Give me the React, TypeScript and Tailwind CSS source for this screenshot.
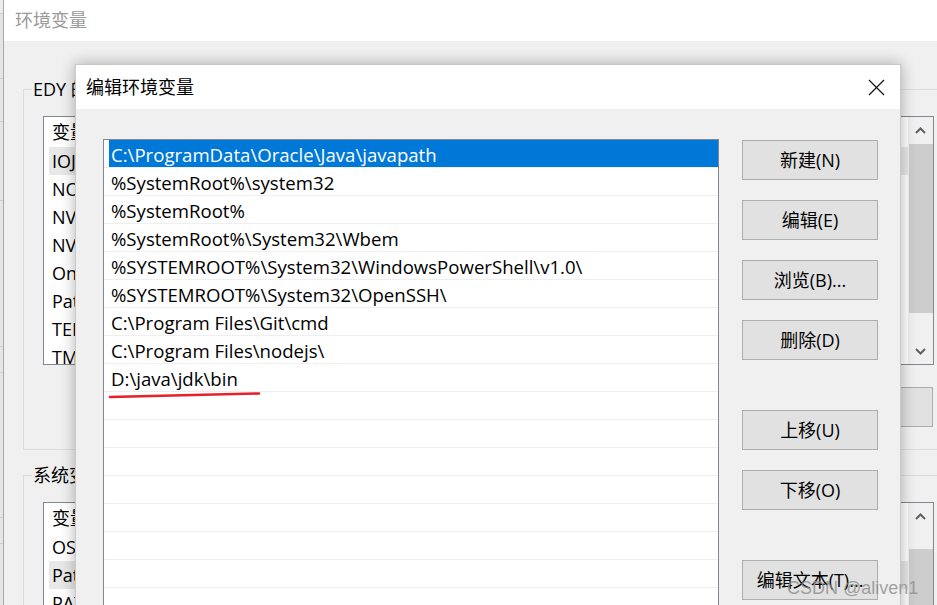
import React from 'react'

const pathEntries = [
  'C:\\ProgramData\\Oracle\\Java\\javapath',
  '%SystemRoot%\\system32',
  '%SystemRoot%',
  '%SystemRoot%\\System32\\Wbem',
  '%SYSTEMROOT%\\System32\\WindowsPowerShell\\v1.0\\',
  '%SYSTEMROOT%\\System32\\OpenSSH\\',
  'C:\\Program Files\\Git\\cmd',
  'C:\\Program Files\\nodejs\\',
  'D:\\java\\jdk\\bin',
  '', '', '', '', '', '', '', '',
]

const dialogButtons = [
  { label: '新建(N)', gap: 'mt-0' },
  { label: '编辑(E)', gap: 'mt-[20px]' },
  { label: '浏览(B)...', gap: 'mt-[20px]' },
  { label: '删除(D)', gap: 'mt-[20px]' },
  { label: '上移(U)', gap: 'mt-[50px]' },
  { label: '下移(O)', gap: 'mt-[20px]' },
  { label: '编辑文本(T)...', gap: 'mt-[50px]' },
]

const userVars = ['IOJ_HOME', 'NODE_PATH', 'NVM_HOME', 'NVM_SYMLINK', 'OneDrive', 'Path', 'TEMP', 'TMP']
const systemVars = ['OS', 'Path', 'PATHEXT', 'PROCESSOR_ARCHITECTURE']

function Chevron({ up }: { up?: boolean }) {
  return (
    <svg width="11" height="7" viewBox="0 0 11 7" className="block">
      <polyline
        points={up ? '1,6 5.5,1.5 10,6' : '1,1 5.5,5.5 10,1'}
        fill="none"
        stroke="#606060"
        strokeWidth="2"
      />
    </svg>
  )
}

function BgList({ rows, highlight, height, thumbTop, thumbHeight }: {
  rows: string[]
  highlight: number
  height: string
  thumbTop: string
  thumbHeight: string
}) {
  return (
    <div className={`flex w-[891px] ${height} border border-[#828790] bg-white overflow-hidden`}>
      <div className="flex-1 pl-[5px]">
        <div className="h-[30px] flex items-center pl-[3px]">变量</div>
        {rows.map((r, i) => (
          <div
            key={r}
            className={`h-[28px] flex items-center pl-[3px] ${i === highlight ? 'bg-[#e8e8e8]' : ''}`}
          >
            {r}
          </div>
        ))}
      </div>
      <div className="w-[25px] bg-[#f0f0f0] flex flex-col items-center">
        <div className="h-[27px] shrink-0 flex items-center justify-center">
          <Chevron up />
        </div>
        <div className={`w-[24px] shrink-0 ${thumbTop} ${thumbHeight} bg-[#cdcdcd]`} />
        <div className="flex-1" />
        <div className="h-[26px] shrink-0 flex items-center justify-center">
          <Chevron />
        </div>
      </div>
    </div>
  )
}

export default function App() {
  return (
    <div className="relative w-[937px] h-[605px] overflow-hidden bg-[#f0f0f0] text-[18px] text-black font-['Open_Sans','Noto_Sans_CJK_SC',sans-serif]">
      <div className="flex h-full">
        {/* window behind, only its edge shows */}
        <div className="w-[4px] shrink-0 h-full bg-[#e4e4e4] border-r border-[#a8a8a8] flex flex-col">
          <div className="h-[14px] shrink-0 bg-[#ededed] border-b border-[#cfcfcf]" />
          <div className="h-[65px] shrink-0 border-b border-[#cfcfcf]" />
          <div className="h-[43px] shrink-0 border-b border-[#cfcfcf]" />
          <div className="h-[79px] shrink-0 border-b border-[#cfcfcf]" />
          <div className="h-[146px] shrink-0 border-b border-[#cfcfcf]" />
          <div className="h-[26px] shrink-0 border-b border-[#cfcfcf]" />
          <div className="h-[145px] shrink-0 border-b border-[#cfcfcf]" />
          <div className="h-[26px] shrink-0 border-b border-[#cfcfcf]" />
        </div>

        {/* 环境变量 window */}
        <div className="flex-1 flex flex-col overflow-hidden">
          <div className="h-[41px] shrink-0 bg-white flex items-center pl-[11px] text-[#9a9a9a]">环境变量</div>
          <div className="flex-1 min-h-0 pl-[19px]">
            <div className="relative mt-[48px] w-[940px] border border-[#dcdcdc] pl-[19px] pt-[26px] pb-[22px]">
              <span className="absolute -top-[13px] left-[8px] px-[1px] bg-[#f0f0f0] leading-[24px]">EDY 的用户变量</span>
              <BgList rows={userVars} highlight={0} height="h-[249px]" thumbTop="mt-0" thumbHeight="h-[169px]" />
              <div className="mt-[22px] w-[891px] flex justify-end pr-[1px]">
                <div className="w-[136px] h-[40px] bg-[#e1e1e1] border border-[#adadad]" />
              </div>
            </div>
            <div className="relative mt-[25px] w-[940px] h-[200px] border border-[#dcdcdc] pl-[19px] pt-[26px]">
              <span className="absolute -top-[13px] left-[8px] px-[1px] bg-[#f0f0f0] leading-[24px]">系统变量</span>
              <BgList rows={systemVars} highlight={1} height="h-[200px]" thumbTop="mt-[19px]" thumbHeight="h-[120px]" />
            </div>
          </div>
        </div>
      </div>

      {/* 编辑环境变量 dialog */}
      <div className="absolute left-[75px] top-[64px] w-[826px] h-[580px] flex flex-col border border-[#c9c9c9] bg-[#f0f0f0] shadow-[0_0_14px_rgba(0,0,0,0.3)]">
        <div className="h-[44px] shrink-0 bg-white flex items-center justify-between pl-[10px] pr-[15px]">
          <span>编辑环境变量</span>
          <svg width="17" height="17" viewBox="0 0 17 17">
            <path d="M1 1 L16 16 M16 1 L1 16" stroke="#111" strokeWidth="1.2" />
          </svg>
        </div>
        <div className="flex-1 flex pt-[30px] pl-[27px]">
          <div className="w-[616px] h-full border border-[#828790] border-b-0 bg-white">
            {pathEntries.map((p, i) => (
              <div key={i} className="h-[28px] border-b border-[#efefef]">
                <div
                  className={`ml-[5px] h-[27px] pl-[2px] pt-[2px] flex items-center whitespace-nowrap text-[18.6px] ${i === 0 ? 'bg-[#0078d7] text-white' : ''}`}
                >
                  {p}
                </div>
              </div>
            ))}
          </div>
          <div className="ml-[23px] pt-[1px] flex flex-col">
            {dialogButtons.map(b => (
              <div
                key={b.label}
                className={`${b.gap} w-[136px] h-[40px] bg-[#e1e1e1] border border-[#adadad] flex items-center justify-center`}
              >
                {b.label}
              </div>
            ))}
          </div>
        </div>
      </div>

      {/* red hand-drawn underline */}
      <svg className="absolute left-[108px] top-[389px]" width="154" height="12" viewBox="0 0 154 12">
        <path d="M2 8 C 40 7, 90 6, 151 4.5" fill="none" stroke="#e8202a" strokeWidth="2.6" strokeLinecap="round" />
      </svg>

      <div className="absolute left-[787px] top-[575px] text-[18px] leading-[26px] text-[#8c8c8c]/80 font-['Liberation_Sans',sans-serif]">
        CSDN @aliven1
      </div>
    </div>
  )
}
